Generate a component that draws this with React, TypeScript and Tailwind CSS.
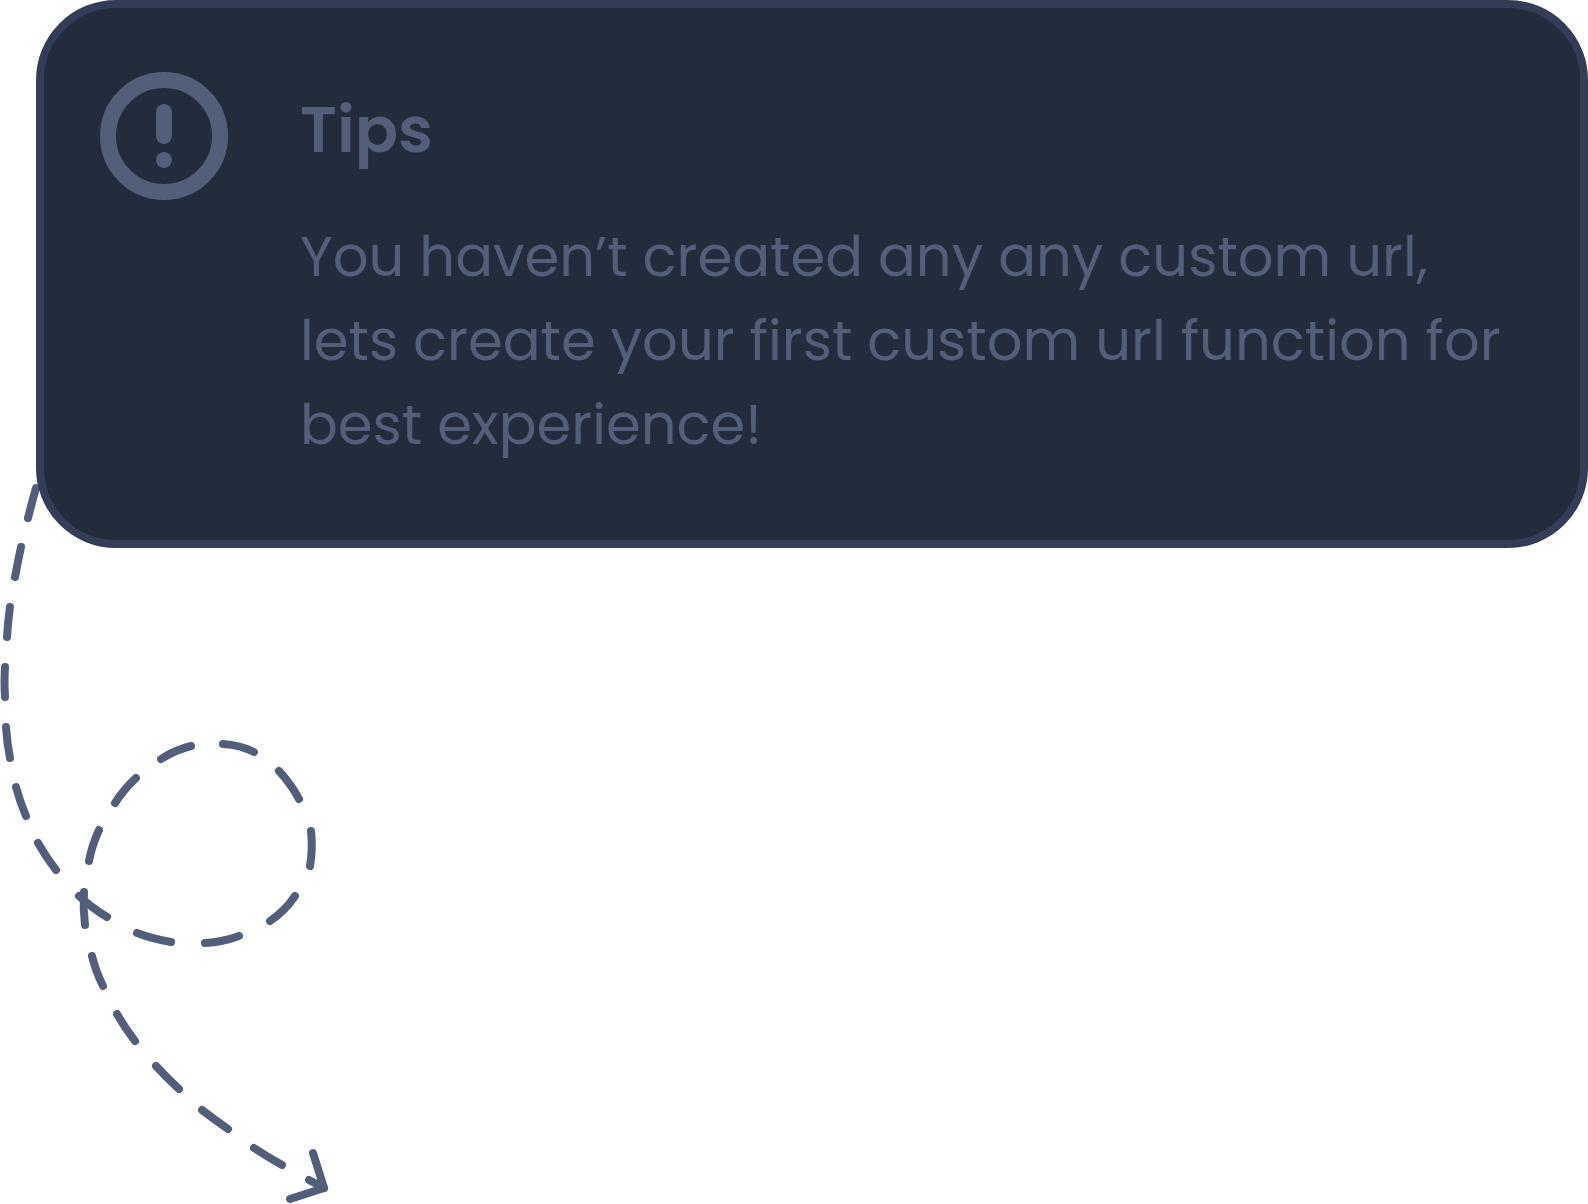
const dashes = [
  "M36 488Q32 502 28 518",
  "M21 547Q18 561 15 577",
  "M10 607Q8 621 7 637",
  "M5 667Q4 682 5 697",
  "M6 727Q7 743 10 758",
  "M16 787Q20 802 26 816",
  "M38 843Q46 857 56 870",
  "M79 896Q92 908 107 917",
  "M137 933Q153 939 171 942",
  "M205 943Q223 942 239 936",
  "M270 921Q285 911 295 896",
  "M310 866Q313 848 311 831",
  "M299 799Q291 784 279 771",
  "M254 752Q240 745 223 744",
  "M191 746Q175 750 161 759",
  "M136 778Q124 789 115 803",
  "M99 830Q92 845 89 861",
  "M84 892Q83 909 85 925",
  "M92 956Q96 972 103 986",
  "M117 1014Q125 1028 135 1041",
  "M156 1066Q167 1078 179 1089",
  "M202 1110Q215 1120 228 1129",
  "M254 1148Q268 1157 282 1165",
  "M309 1180L324 1188",
];

function AlertIcon() {
  return (
    <svg viewBox="0 0 128 128" className="size-32 shrink-0" fill="none" aria-hidden="true">
      <circle cx="64" cy="64" r="56" stroke="#535f7a" strokeWidth="16" />
      <rect x="56" y="32" width="16" height="40" rx="8" fill="#535f7a" />
      <circle cx="64" cy="88" r="8" fill="#535f7a" />
    </svg>
  );
}

function DashedArrow() {
  return (
    <svg
      viewBox="0 480 332 724"
      className="-mt-[68px] block h-[724px] w-[332px]"
      fill="none"
      stroke="#535f7a"
      strokeWidth="8"
      strokeLinecap="round"
      strokeLinejoin="round"
      aria-hidden="true"
    >
      {dashes.map((d) => (
        <path key={d} d={d} />
      ))}
      <path d="M313 1153L324 1188L290 1199" />
    </svg>
  );
}

export default function App() {
  return (
    <main className="bg-white font-[Poppins,Inter,sans-serif] text-[#535f7a]">
      <section className="relative z-10 ml-9 flex items-start gap-[72px] rounded-[80px] border-8 border-[#343d57] bg-[#232c3d] px-14 pt-16 pb-[73px]">
        <AlertIcon />
        <div className="pt-[10px]">
          <h1 className="text-[64px] leading-[96px] font-semibold">Tips</h1>
          <p className="mt-[37px] text-[56px] leading-[84px]">
            You haven’t created any any custom url,
            <br />
            lets create your first custom url function for
            <br />
            best experience!
          </p>
        </div>
      </section>
      <DashedArrow />
    </main>
  );
}
